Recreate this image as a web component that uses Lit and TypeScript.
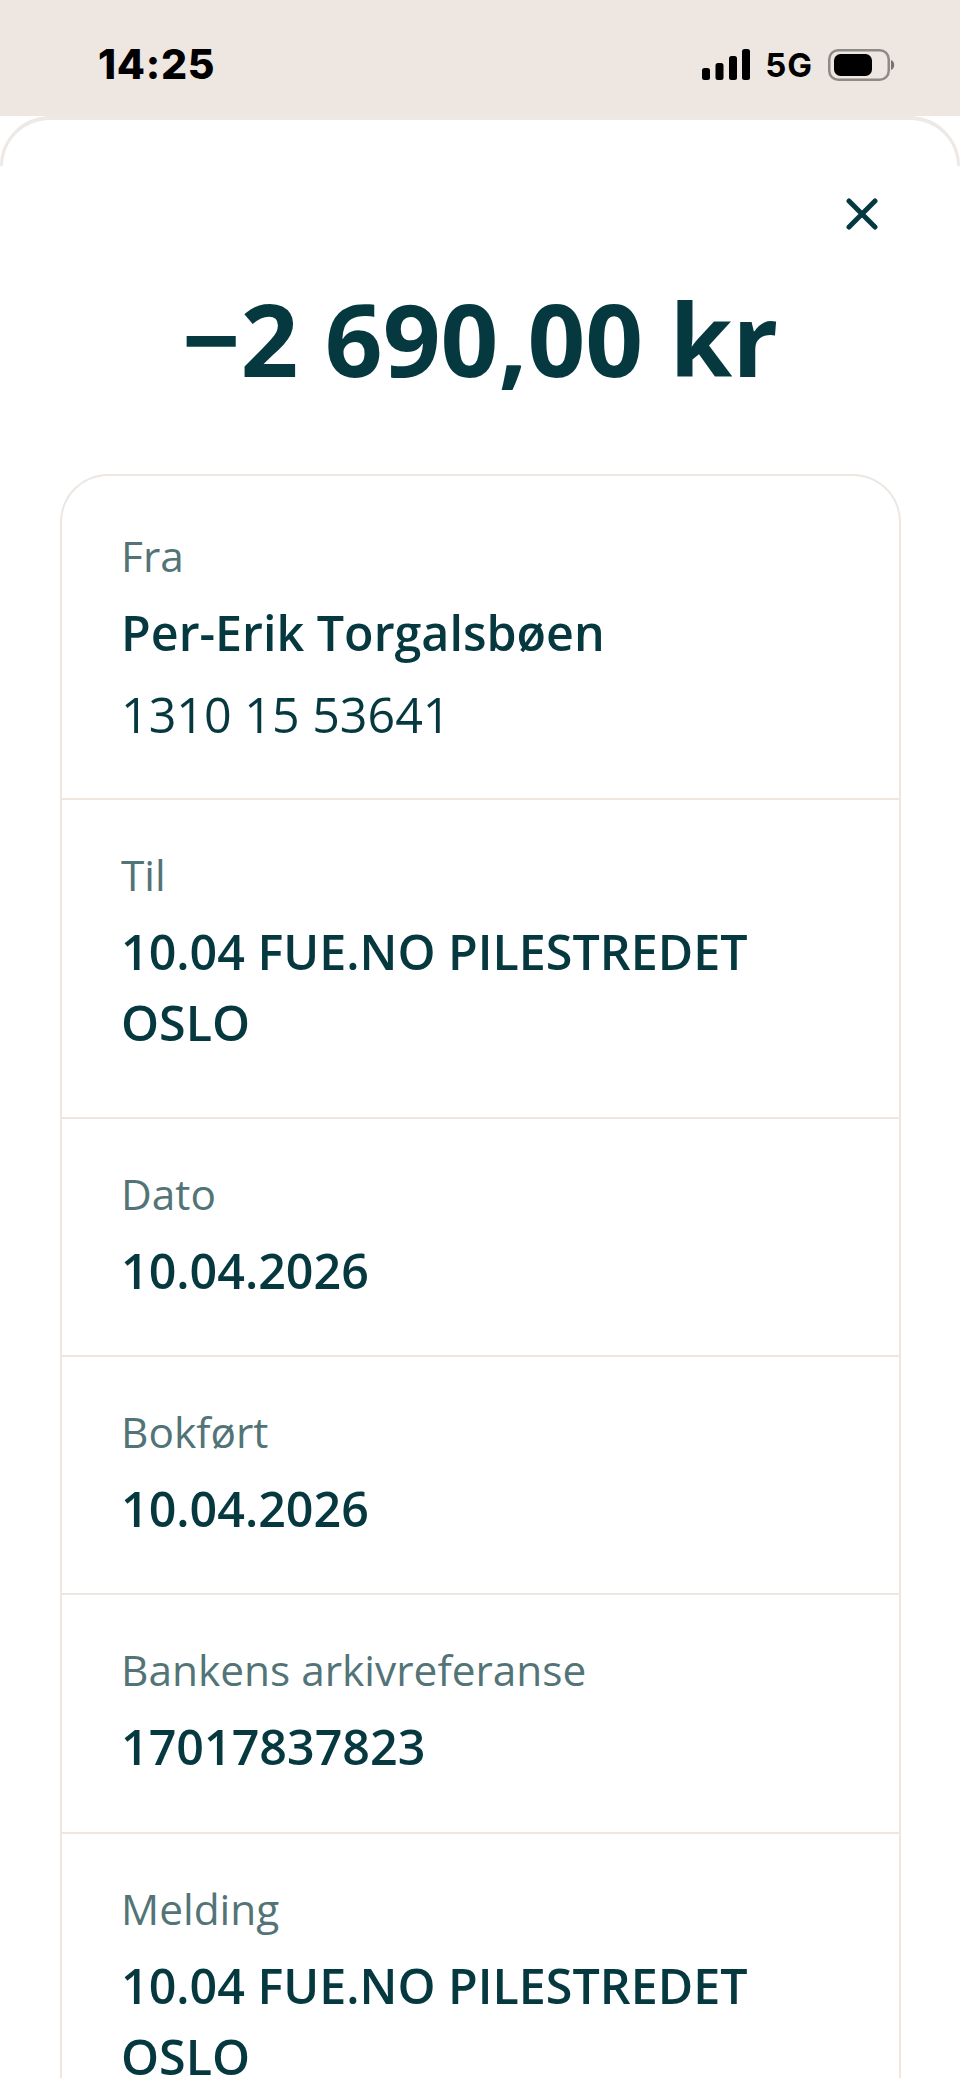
import { LitElement, html, css } from "lit";
import { customElement } from "lit/decorators.js";

@customElement("app-root")
export class AppRoot extends LitElement {
  static styles = css`
    :host { display: block; height: 2078px; overflow: hidden; background: #fff; font-family: "Open Sans", sans-serif; color: #05393f; }
    .status { height: 116px; background: #ede6e1; display: flex; justify-content: space-between; align-items: flex-start; padding: 0 65px 0 98px; box-sizing: border-box; }
    .time { font-family: Inter, sans-serif; font-weight: 800; font-size: 41px; line-height: 46px; margin-top: 41px; color: #000; letter-spacing: 0.7px; }
    .icons { display: flex; align-items: center; margin-top: 48px; gap: 15px; }
    .net { font-family: Inter, sans-serif; font-weight: 700; font-size: 33px; line-height: 32px; letter-spacing: 1px; color: #000; margin-top: 1px; }
    .sheet { position: relative; padding: 0 59px 60px 60px; }
    .sheet::before { content: ""; position: absolute; left: 0; right: 0; top: 0; height: 50px; box-sizing: border-box; border-style: solid; border-color: #efe9e5; border-width: 4px 3px 0; border-radius: 50px 50px 0 0; }
    .close { display: flex; justify-content: flex-end; padding: 82px 23px 0 0; height: 32px; }
    .amount { text-align: center; font-weight: 700; font-size: 101.3px; line-height: 136px; margin-top: 40px; }
    .card { margin-top: 68px; border: 2px solid #ede6e1; border-radius: 48px 48px 0 0; border-bottom: none; }
    .row { padding: 47px 60px 49.2px 59px; border-bottom: 2px solid #ede6e1; }
    .row:last-child { border-bottom: none; }
    .row.first { padding-top: 52px; padding-bottom: 48px; }
    .row.wrap { padding-bottom: 59px; }
    .label { font-size: 42.4px; line-height: 56px; color: #527477; }
    .value { font-size: 48.4px; line-height: 71px; font-weight: 600; margin-top: 13px; }
    .plain { font-size: 48.4px; line-height: 71px; font-weight: 400; margin-top: 11px; }
  `;

  private signal() {
    return html`<svg width="48" height="31" viewBox="0 0 48 31">
      <rect x="0" y="19" width="8" height="12" rx="2.5" fill="#000"/>
      <rect x="13.5" y="14" width="8" height="17" rx="2.5" fill="#000"/>
      <rect x="27" y="7" width="8" height="24" rx="2.5" fill="#000"/>
      <rect x="40" y="0" width="8" height="31" rx="2.5" fill="#000"/>
    </svg>`;
  }

  private battery() {
    return html`<svg width="67" height="32" viewBox="0 0 67 32">
      <rect x="1.25" y="1.25" width="59.5" height="29.5" rx="9" fill="none" stroke="#8e8a86" stroke-width="2.5"/>
      <rect x="6" y="5" width="38" height="22" rx="6.5" fill="#000"/>
      <path d="M63 11 a5.5 5.5 0 0 1 0 10 z" fill="#77736f"/>
    </svg>`;
  }

  private closeIcon() {
    return html`<svg width="32" height="32" viewBox="0 0 32 32">
      <path d="M3 3 L29 29 M29 3 L3 29" stroke="#05393f" stroke-width="5" stroke-linecap="round" fill="none"/>
    </svg>`;
  }

  render() {
    return html`
      <div class="status">
        <div class="time">14:25</div>
        <div class="icons">${this.signal()}<div class="net">5G</div>${this.battery()}</div>
      </div>
      <div class="sheet">
        <div class="close">${this.closeIcon()}</div>
        <div class="amount">−2 690,00 kr</div>
        <div class="card">
          <div class="row first">
            <div class="label">Fra</div>
            <div class="value">Per-Erik Torgalsbøen</div>
            <div class="plain">1310 15 53641</div>
          </div>
          <div class="row wrap">
            <div class="label">Til</div>
            <div class="value">10.04 FUE.NO PILESTREDET OSLO</div>
          </div>
          <div class="row">
            <div class="label">Dato</div>
            <div class="value">10.04.2026</div>
          </div>
          <div class="row">
            <div class="label">Bokført</div>
            <div class="value">10.04.2026</div>
          </div>
          <div class="row">
            <div class="label">Bankens arkivreferanse</div>
            <div class="value">17017837823</div>
          </div>
          <div class="row">
            <div class="label">Melding</div>
            <div class="value">10.04 FUE.NO PILESTREDET OSLO</div>
          </div>
        </div>
      </div>
    `;
  }
}
